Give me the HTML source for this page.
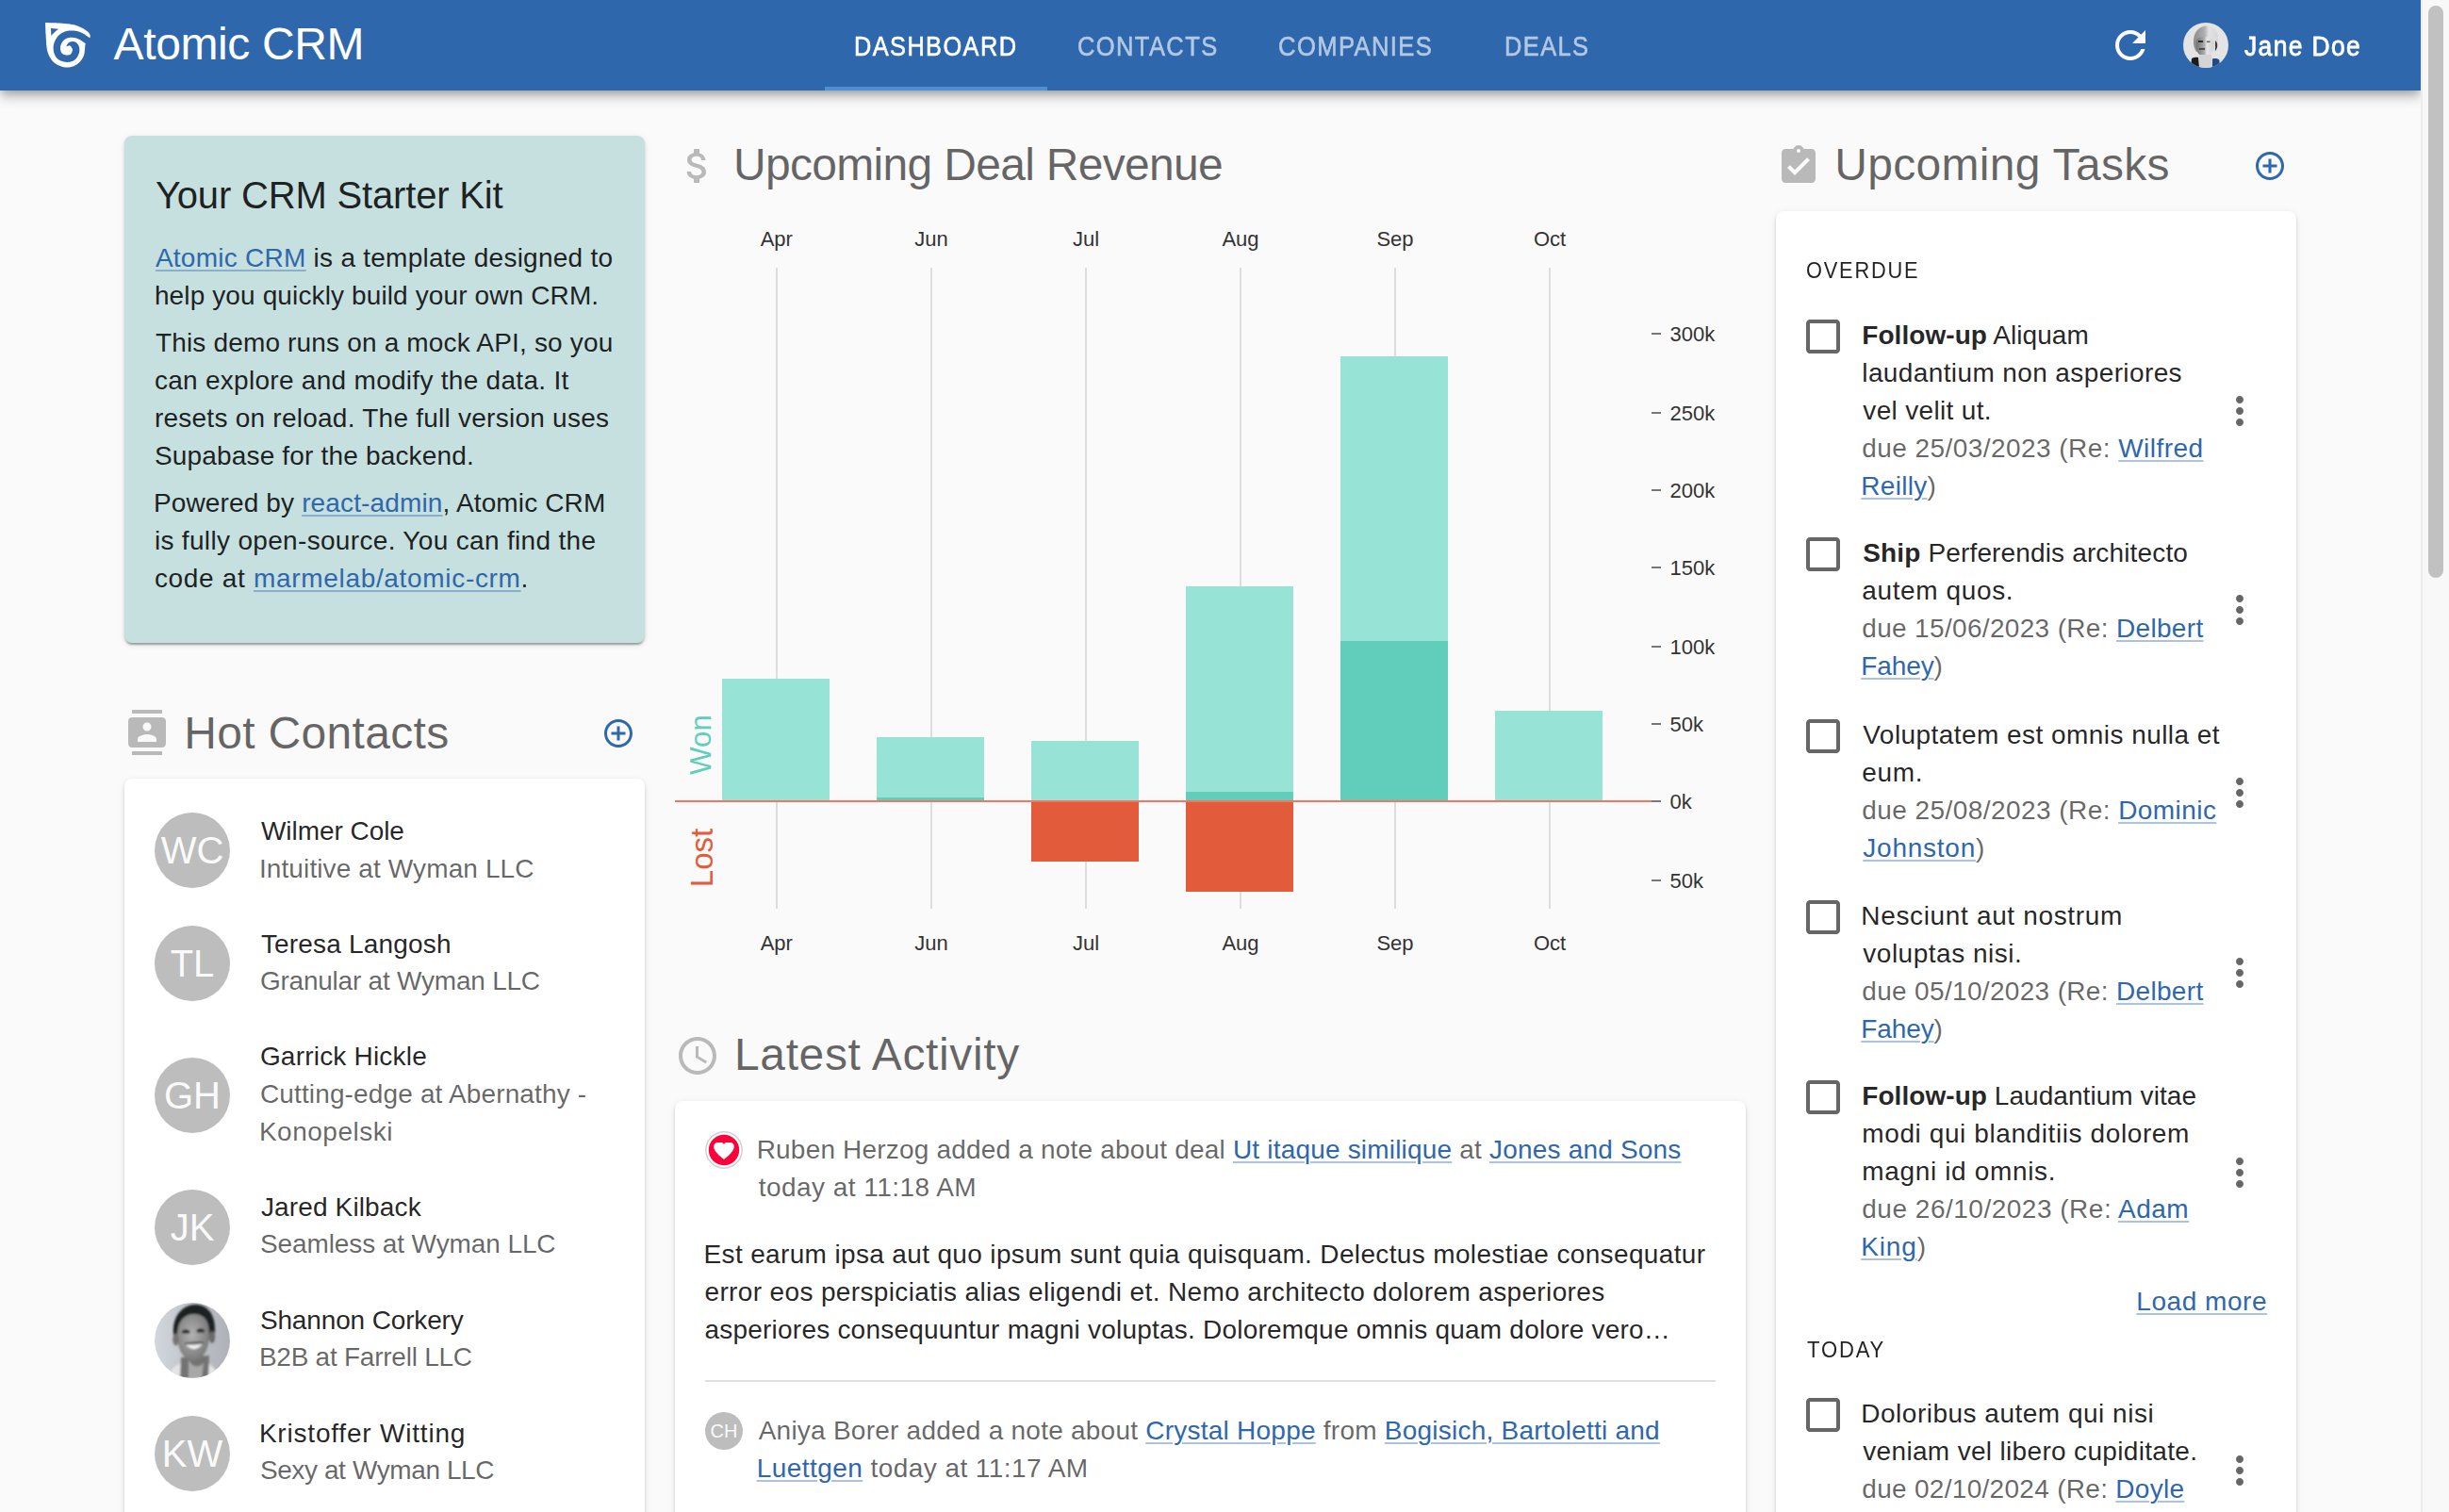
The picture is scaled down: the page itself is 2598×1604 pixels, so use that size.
<!DOCTYPE html><html><head><meta charset="utf-8"><style>
html,body{margin:0;padding:0;overflow:hidden;background:#fafafa;}
body{width:2598px;height:1604px;position:relative;font-family:"Liberation Sans", sans-serif;}
.t{position:absolute;white-space:nowrap;z-index:4;}
a{color:#2f67ad;text-decoration:underline;text-decoration-color:rgba(47,103,173,0.4);text-decoration-thickness:2px;text-underline-offset:3px;}
.abs{position:absolute;}
.card{position:absolute;background:#fff;border-radius:8px;box-shadow:0 4px 2px -2px rgba(0,0,0,0.2),0 2px 2px 0 rgba(0,0,0,0.14),0 2px 6px 0 rgba(0,0,0,0.12);}
svg{position:absolute;display:block;}
</style></head><body>

<div class="abs" style="left:0;top:0;width:2568px;height:96px;background:#2f67ad;box-shadow:0 4px 8px -2px rgba(0,0,0,0.2),0 8px 10px 0 rgba(0,0,0,0.14),0 2px 20px 0 rgba(0,0,0,0.12);z-index:2"></div>
<div class="abs" style="left:875px;top:92px;width:236px;height:4px;background:#4f8fd6;z-index:3"></div>
<div class="abs" style="left:2568px;top:0;width:30px;height:1604px;background:#f8f8f8;border-left:2px solid #ececec;box-sizing:border-box;z-index:5"></div>
<div class="abs" style="left:2576px;top:6px;width:16px;height:607px;background:#c1c1c1;border-radius:8px;z-index:6"></div>
<svg style="left:40px;top:16px;z-index:4" width="64" height="64" viewBox="0 0 64 64"><path fill="#fff" d="M8.04,7.96 C10.52,8.04 18.59,8.21 22.90,8.47 C27.21,8.73 30.67,9.01 33.90,9.50 C37.13,9.99 39.83,10.58 42.30,11.40 C44.77,12.22 46.87,13.33 48.70,14.40 C50.53,15.47 52.17,16.72 53.30,17.80 C54.43,18.88 55.15,19.88 55.50,20.90 C55.85,21.92 55.72,23.07 55.40,23.90 C55.08,24.73 54.40,24.72 53.60,25.90 C52.80,27.08 51.22,28.97 50.60,31.00 C49.98,33.03 50.22,36.00 49.90,38.10 C49.58,40.20 49.53,41.70 48.70,43.60 C47.87,45.50 46.67,47.73 44.90,49.50 C43.13,51.27 40.65,53.20 38.10,54.20 C35.55,55.20 32.28,55.65 29.60,55.50 C26.92,55.35 24.32,54.43 22.00,53.30 C19.68,52.17 17.47,50.67 15.70,48.70 C13.93,46.73 12.43,43.97 11.40,41.50 C10.37,39.03 9.97,37.28 9.50,33.90 C9.03,30.52 8.84,25.52 8.60,21.20 C8.36,16.88 8.13,10.17 8.04,7.96Z"/><path fill="#2f67ad" d="M60.74,28.55 L60.51,28.38 L60.24,28.18 L59.93,27.94 L59.57,27.66 L59.18,27.36 L58.77,27.04 L58.33,26.71 L57.87,26.36 L57.40,26.00 L56.92,25.64 L56.44,25.27 L55.96,24.91 L55.48,24.56 L55.02,24.22 L54.57,23.89 L54.16,23.59 L53.78,23.32 L53.42,23.06 L53.05,22.79 L52.69,22.52 L52.31,22.25 L51.94,21.97 L51.55,21.69 L51.16,21.41 L50.76,21.13 L50.35,20.86 L49.93,20.58 L49.50,20.31 L49.05,20.04 L48.58,19.77 L48.11,19.52 L47.63,19.28 L47.17,19.06 L46.72,18.85 L46.26,18.64 L45.80,18.44 L45.32,18.24 L44.83,18.05 L44.34,17.86 L43.84,17.68 L43.32,17.51 L42.80,17.34 L42.27,17.19 L41.73,17.05 L41.17,16.92 L40.61,16.81 L40.04,16.71 L39.48,16.63 L38.92,16.57 L38.36,16.51 L37.79,16.47 L37.22,16.43 L36.63,16.41 L36.04,16.40 L35.44,16.40 L34.83,16.41 L34.23,16.44 L33.62,16.49 L33.00,16.55 L32.39,16.63 L31.78,16.73 L31.17,16.84 L30.56,16.99 L29.96,17.15 L29.39,17.33 L28.84,17.52 L28.29,17.72 L27.75,17.95 L27.21,18.19 L26.67,18.45 L26.14,18.73 L25.62,19.02 L25.10,19.34 L24.59,19.67 L24.10,20.02 L23.61,20.40 L23.13,20.79 L22.67,21.21 L22.21,21.64 L21.78,22.10 L21.35,22.57 L20.95,23.07 L20.56,23.59 L20.19,24.12 L19.83,24.66 L19.48,25.21 L19.16,25.78 L18.84,26.35 L18.55,26.94 L18.27,27.53 L18.01,28.12 L17.76,28.72 L17.54,29.32 L17.34,29.93 L17.15,30.54 L17.00,31.16 L16.86,31.79 L16.76,32.43 L16.68,33.07 L16.63,33.70 L16.60,34.33 L16.60,34.95 L16.61,35.56 L16.65,36.17 L16.70,36.77 L16.76,37.35 L16.85,37.93 L16.94,38.49 L17.06,39.05 L17.18,39.58 L17.32,40.11 L17.47,40.62 L17.65,41.13 L17.84,41.63 L18.05,42.12 L18.27,42.61 L18.52,43.08 L18.79,43.54 L19.07,43.99 L19.38,44.43 L19.70,44.85 L20.04,45.26 L20.40,45.65 L20.78,46.03 L21.17,46.39 L21.58,46.74 L22.00,47.07 L22.45,47.38 L22.93,47.68 L23.43,47.97 L23.94,48.22 L24.46,48.46 L24.98,48.67 L25.51,48.87 L26.04,49.05 L26.58,49.21 L27.12,49.35 L27.66,49.48 L28.21,49.60 L28.75,49.69 L29.29,49.77 L29.83,49.83 L30.37,49.88 L30.91,49.90 L31.43,49.90 L31.96,49.89 L32.48,49.86 L33.01,49.81 L33.54,49.74 L34.07,49.65 L34.59,49.55 L35.12,49.42 L35.64,49.28 L36.16,49.12 L36.68,48.93 L37.19,48.72 L37.70,48.48 L38.20,48.22 L38.69,47.92 L39.19,47.58 L39.68,47.20 L40.13,46.79 L40.54,46.36 L40.92,45.92 L41.27,45.48 L41.59,45.03 L41.89,44.58 L42.16,44.13 L42.42,43.68 L42.65,43.23 L42.87,42.78 L43.07,42.34 L43.26,41.90 L43.42,41.48 L43.58,41.06 L43.72,40.64 L43.86,40.19 L43.98,39.73 L44.08,39.27 L44.17,38.81 L44.23,38.35 L44.29,37.88 L44.32,37.42 L44.34,36.96 L44.34,36.50 L44.32,36.04 L44.28,35.58 L44.23,35.12 L44.16,34.66 L44.06,34.20 L43.94,33.74 L43.79,33.27 L43.60,32.78 L43.38,32.31 L43.13,31.87 L42.88,31.45 L42.60,31.06 L42.32,30.69 L42.03,30.34 L41.72,30.01 L41.41,29.70 L41.10,29.40 L40.78,29.12 L40.45,28.86 L40.08,28.66 L39.68,28.52 L39.28,28.40 L38.88,28.28 L38.46,28.18 L38.05,28.11 L37.63,28.06 L37.23,28.03 L36.83,28.03 L36.43,28.05 L36.05,28.09 L35.67,28.14 L35.30,28.22 L34.94,28.31 L34.59,28.41 L34.25,28.53 L33.91,28.67 L33.59,28.82 L33.28,28.99 L32.96,29.18 L32.63,29.41 L32.32,29.68 L32.06,29.97 L31.83,30.27 L31.63,30.57 L31.45,30.88 L31.28,31.19 L31.13,31.50 L30.99,31.81 L30.86,32.10 L30.74,32.38 L30.63,32.64 L30.54,32.87 L30.45,33.08 L30.37,33.26 L30.30,33.40 L30.30,33.40 L30.45,33.35 L30.64,33.28 L30.85,33.19 L31.09,33.09 L31.34,32.98 L31.62,32.87 L31.90,32.75 L32.20,32.65 L32.49,32.55 L32.78,32.46 L33.06,32.38 L33.33,32.33 L33.57,32.31 L33.78,32.32 L33.93,32.36 L34.04,32.42 L34.16,32.49 L34.31,32.55 L34.46,32.63 L34.61,32.71 L34.75,32.80 L34.89,32.90 L35.03,33.01 L35.15,33.12 L35.27,33.24 L35.38,33.36 L35.48,33.49 L35.56,33.62 L35.62,33.75 L35.67,33.87 L35.70,34.00 L35.72,34.12 L35.75,34.25 L35.79,34.40 L35.83,34.57 L35.91,34.70 L36.03,34.80 L36.14,34.90 L36.26,35.00 L36.36,35.11 L36.46,35.22 L36.56,35.33 L36.63,35.43 L36.70,35.53 L36.75,35.60 L36.78,35.67 L36.80,35.71 L36.81,35.73 L36.83,35.79 L36.86,35.89 L36.88,36.01 L36.90,36.14 L36.92,36.29 L36.93,36.46 L36.94,36.63 L36.94,36.82 L36.93,37.01 L36.92,37.20 L36.89,37.40 L36.87,37.60 L36.83,37.79 L36.79,37.99 L36.74,38.17 L36.68,38.36 L36.60,38.59 L36.51,38.84 L36.41,39.10 L36.30,39.36 L36.17,39.63 L36.05,39.89 L35.91,40.15 L35.77,40.40 L35.63,40.63 L35.49,40.85 L35.35,41.04 L35.22,41.21 L35.09,41.36 L34.98,41.47 L34.89,41.56 L34.81,41.62 L34.71,41.68 L34.57,41.77 L34.41,41.85 L34.23,41.94 L34.02,42.02 L33.79,42.11 L33.55,42.18 L33.29,42.25 L33.03,42.31 L32.75,42.37 L32.47,42.41 L32.19,42.45 L31.91,42.48 L31.63,42.50 L31.35,42.50 L31.09,42.50 L30.83,42.49 L30.55,42.47 L30.25,42.43 L29.93,42.39 L29.60,42.33 L29.27,42.26 L28.94,42.18 L28.61,42.09 L28.28,41.99 L27.97,41.89 L27.67,41.78 L27.39,41.66 L27.14,41.55 L26.91,41.43 L26.72,41.33 L26.55,41.22 L26.38,41.10 L26.22,40.98 L26.06,40.84 L25.91,40.70 L25.76,40.56 L25.62,40.40 L25.49,40.24 L25.36,40.07 L25.24,39.90 L25.12,39.71 L25.01,39.51 L24.90,39.31 L24.80,39.09 L24.70,38.87 L24.61,38.63 L24.53,38.38 L24.44,38.10 L24.36,37.80 L24.29,37.47 L24.22,37.13 L24.16,36.77 L24.10,36.41 L24.06,36.03 L24.03,35.65 L24.01,35.28 L24.00,34.90 L24.00,34.52 L24.02,34.16 L24.05,33.81 L24.09,33.47 L24.14,33.15 L24.20,32.84 L24.29,32.52 L24.39,32.16 L24.52,31.79 L24.66,31.40 L24.82,31.00 L25.00,30.60 L25.19,30.20 L25.39,29.80 L25.61,29.40 L25.83,29.02 L26.06,28.64 L26.30,28.29 L26.53,27.95 L26.77,27.64 L27.00,27.36 L27.22,27.10 L27.45,26.87 L27.69,26.64 L27.94,26.41 L28.21,26.20 L28.48,25.99 L28.77,25.78 L29.06,25.59 L29.37,25.40 L29.68,25.22 L30.00,25.06 L30.33,24.90 L30.67,24.75 L31.01,24.61 L31.35,24.48 L31.70,24.36 L32.04,24.25 L32.37,24.16 L32.70,24.08 L33.06,24.01 L33.44,23.95 L33.84,23.90 L34.25,23.86 L34.67,23.83 L35.10,23.81 L35.54,23.80 L35.98,23.80 L36.42,23.81 L36.85,23.82 L37.29,23.85 L37.71,23.88 L38.13,23.92 L38.52,23.97 L38.89,24.02 L39.25,24.08 L39.60,24.16 L39.96,24.24 L40.32,24.33 L40.68,24.44 L41.05,24.55 L41.41,24.67 L41.78,24.80 L42.15,24.94 L42.52,25.09 L42.89,25.25 L43.26,25.41 L43.64,25.58 L44.01,25.75 L44.37,25.92 L44.70,26.09 L45.00,26.25 L45.31,26.43 L45.62,26.61 L45.93,26.81 L46.25,27.02 L46.57,27.23 L46.90,27.46 L47.23,27.70 L47.58,27.95 L47.93,28.21 L48.29,28.47 L48.66,28.75 L49.05,29.03 L49.45,29.32 L49.84,29.61 L50.24,29.89 L50.65,30.19 L51.08,30.51 L51.53,30.84 L51.99,31.19 L52.45,31.54 L52.92,31.89 L53.38,32.24 L53.83,32.59 L54.27,32.92 L54.68,33.24 L55.07,33.53 L55.43,33.81 L55.75,34.05 L56.03,34.27 L56.26,34.45Z"/><path fill="#2f67ad" d="M13.97,13.97 L22,14.8 C19,17.2 16.5,19.5 14.4,22 Z"/></svg>
<svg style="left:2236px;top:24px;z-index:4" width="48" height="48" viewBox="0 0 24 24"><path fill="#fff" d="M17.65 6.35C16.2 4.9 14.21 4 12 4c-4.42 0-7.99 3.58-7.99 8s3.57 8 7.99 8c3.73 0 6.84-2.55 7.73-6h-2.08c-.82 2.33-3.04 4-5.65 4-3.31 0-6-2.69-6-6s2.69-6 6-6c1.66 0 3.14.69 4.22 1.78L13 11h7V4l-2.35 2.35z"/></svg>
<svg style="left:2316px;top:24px;z-index:4" width="48" height="48" viewBox="0 0 48 48">
<defs><clipPath id="cj"><circle cx="24" cy="24" r="24"/></clipPath>
<linearGradient id="gh" x1="0" x2="1" y1="0" y2="0"><stop offset="0" stop-color="#8a8a8a"/><stop offset="0.45" stop-color="#b0b0b0"/><stop offset="0.62" stop-color="#e2e2e2"/><stop offset="1" stop-color="#d8d8d8"/></linearGradient>
<linearGradient id="gf" x1="0" x2="1" y1="0" y2="0"><stop offset="0" stop-color="#707070"/><stop offset="0.45" stop-color="#a8a8a8"/><stop offset="0.62" stop-color="#e6e6e6"/><stop offset="1" stop-color="#cfcfcf"/></linearGradient>
<filter id="jbl"><feGaussianBlur stdDeviation="0.7"/></filter></defs>
<g clip-path="url(#cj)"><rect width="48" height="48" fill="#e4e4e4"/><g filter="url(#jbl)">
<path d="M11,22 C10.5,10 17,3.5 25,3.5 C33,3.5 37.5,9 37,18 C37,24 35.5,28 34,31 L14,31 C12,28 11.2,25 11,22 Z" fill="url(#gh)"/>
<path d="M13.5,23 C13.5,16 17,15.5 22,15 C28,15 32.5,17 32.5,23 C32.5,31 28,36 22.5,36 C17,36 13.5,31 13.5,23 Z" fill="url(#gf)"/>
<path d="M34,19 C37,21 37,27 34,30 Z" fill="#3a3a3a"/>
<rect x="16" y="19" width="5" height="2" fill="#2a2a2a"/><rect x="25" y="19.5" width="3.5" height="1.6" fill="#666"/>
<rect x="17" y="27" width="6" height="1.8" fill="#444"/>
<path d="M17,34 L30,34 L31,48 L17,48 Z" fill="#d4d4d4"/>
<path d="M9,38 C11,37 14,36.5 16,37 L17,48 L8,48 Z" fill="#1c1c1c"/>
<path d="M31,38.5 C34,37.5 37,38 38.5,40 L38.5,48 L31,48 Z" fill="#1f4c8a"/>
</g></g></svg>
<div class="card" style="left:132px;top:144px;width:552px;height:538px;background:#c6dfdf;border-radius:8px"></div>
<div class="card" style="left:132px;top:826px;width:552px;height:900px;"></div>
<div class="card" style="left:716px;top:1168px;width:1136px;height:600px;"></div>
<div class="card" style="left:1884px;top:224px;width:552px;height:1500px;"></div>
<svg style="left:132px;top:753px" width="48" height="48" viewBox="0 0 24 24"><path fill="rgba(0,0,0,0.26)" d="M20 0H4v2h16V0zM4 24h16v-2H4v2zM20 4H4c-1.1 0-2 .9-2 2v12c0 1.1.9 2 2 2h16c1.1 0 2-.9 2-2V6c0-1.1-.9-2-2-2zm-8 2.75c1.24 0 2.25 1.01 2.25 2.25s-1.01 2.25-2.25 2.25S9.75 10.24 9.75 9 10.76 6.75 12 6.75zM17 17H7v-1.5c0-1.67 3.33-2.5 5-2.5s5 .83 5 2.5V17z"/></svg>
<svg style="left:638px;top:760px" width="36" height="36" viewBox="0 0 24 24"><path fill="#2f67ad" d="M13 7h-2v4H7v2h4v4h2v-4h4v-2h-4V7zm-1-5C6.48 2 2 6.48 2 12s4.48 10 10 10 10-4.48 10-10S17.52 2 12 2zm0 18c-4.41 0-8-3.59-8-8s3.59-8 8-8 8 3.59 8 8-3.59 8-8 8z"/></svg>
<svg style="left:2389.6px;top:158px" width="36" height="36" viewBox="0 0 24 24"><path fill="#2f67ad" d="M13 7h-2v4H7v2h4v4h2v-4h4v-2h-4V7zm-1-5C6.48 2 2 6.48 2 12s4.48 10 10 10 10-4.48 10-10S17.52 2 12 2zm0 18c-4.41 0-8-3.59-8-8s3.59-8 8-8 8 3.59 8 8-3.59 8-8 8z"/></svg>
<svg style="left:716px;top:152px" width="48" height="48" viewBox="0 0 24 24"><path fill="rgba(0,0,0,0.26)" d="M11.8 10.9c-2.27-.59-3-1.2-3-2.15 0-1.09 1.01-1.85 2.7-1.85 1.78 0 2.44.85 2.5 2.1h2.21c-.07-1.72-1.12-3.3-3.21-3.81V3h-3v2.16c-1.94.42-3.5 1.68-3.5 3.61 0 2.31 1.91 3.46 4.7 4.13 2.5.6 3 1.48 3 2.41 0 .69-.49 1.79-2.7 1.79-2.06 0-2.87-.92-2.98-2.1h-2.2c.12 2.19 1.76 3.42 3.68 3.83V21h3v-2.15c1.95-.37 3.5-1.5 3.5-3.55 0-2.84-2.43-3.81-4.7-4.4z"/></svg>
<svg style="left:716px;top:1096px" width="48" height="48" viewBox="0 0 24 24"><path fill="rgba(0,0,0,0.26)" d="M11.99 2C6.47 2 2 6.48 2 12s4.47 10 9.99 10C17.52 22 22 17.52 22 12S17.52 2 11.99 2zM12 20c-4.42 0-8-3.58-8-8s3.58-8 8-8 8 3.58 8 8-3.58 8-8 8zm.5-13H11v6l5.25 3.15.75-1.23-4.5-2.67z"/></svg>
<svg style="left:1884px;top:152px" width="48" height="48" viewBox="0 0 24 24"><path fill="rgba(0,0,0,0.26)" d="M19 3h-4.18C14.4 1.84 13.3 1 12 1c-1.3 0-2.4.84-2.82 2H5c-1.1 0-2 .9-2 2v14c0 1.1.9 2 2 2h14c1.1 0 2-.9 2-2V5c0-1.1-.9-2-2-2zm-7 0c.55 0 1 .45 1 1s-.45 1-1 1-1-.45-1-1 .45-1 1-1zm-2 14l-4-4 1.41-1.41L10 14.17l6.59-6.59L18 9l-8 8z"/></svg>
<div class="abs" style="left:164px;top:862px;width:80px;height:80px;border-radius:50%;background:#bdbdbd;color:#fafafa;font-size:40px;line-height:80px;text-align:center;">WC</div>
<div class="abs" style="left:164px;top:982px;width:80px;height:80px;border-radius:50%;background:#bdbdbd;color:#fafafa;font-size:40px;line-height:80px;text-align:center;">TL</div>
<div class="abs" style="left:164px;top:1122px;width:80px;height:80px;border-radius:50%;background:#bdbdbd;color:#fafafa;font-size:40px;line-height:80px;text-align:center;">GH</div>
<div class="abs" style="left:164px;top:1262px;width:80px;height:80px;border-radius:50%;background:#bdbdbd;color:#fafafa;font-size:40px;line-height:80px;text-align:center;">JK</div>
<div class="abs" style="left:164px;top:1502px;width:80px;height:80px;border-radius:50%;background:#bdbdbd;color:#fafafa;font-size:40px;line-height:80px;text-align:center;">KW</div>
<svg style="left:164px;top:1382px" width="80" height="80" viewBox="0 0 80 80">
<defs><clipPath id="cs"><circle cx="40" cy="40" r="40"/></clipPath>
<linearGradient id="sbg" x1="0" x2="1"><stop offset="0" stop-color="#d2d6dd"/><stop offset="0.5" stop-color="#c0c4ca"/><stop offset="1" stop-color="#aeb2b8"/></linearGradient>
<radialGradient id="sface" cx="0.45" cy="0.45" r="0.6"><stop offset="0" stop-color="#b3b3b3"/><stop offset="1" stop-color="#777777"/></radialGradient>
<filter id="sbl"><feGaussianBlur stdDeviation="0.9"/></filter></defs>
<g clip-path="url(#cs)"><rect width="80" height="80" fill="url(#sbg)"/>
<g filter="url(#sbl)">
<path d="M14,80 C16,70 24,65 30,64 L52,63 C60,65 66,70 68,80 Z" fill="#e4e4e4"/>
<path d="M27,80 L28,58 L58,56 L57,80 Z" fill="#737373"/>
<path d="M36,60 C39,68 46,70 52,64 L50,80 L36,80 Z" fill="#a8a8a8"/>
<path d="M20,32 C19,14 30,2 43,2 C56,2 64,12 64,28 C64,33 63,37 62,39 L21,39 C20.5,37 20,35 20,32 Z" fill="#1e2224"/>
<path d="M24,34 C24,19 32,12 42,12 C52,12 58,18 58,33 C58,50 51,61 41,61 C31,61 24,50 24,34 Z" fill="url(#sface)"/>
<ellipse cx="22.5" cy="39" rx="3.2" ry="6.5" fill="#757575"/><ellipse cx="61" cy="36.5" rx="3.2" ry="6.5" fill="#6a6a6a"/>
<path d="M29,30 C31,28 35,28 37.5,30 L37,32.5 L29.5,32.5 Z" fill="#2b2b2b"/><path d="M44.5,29 C47,27 51,27 53,29 L52.5,31.5 L45,31.5 Z" fill="#2b2b2b"/>
<path d="M33,44 C38,51 46,51 51,43 C46,45.5 38,45.5 33,44 Z" fill="#f0f0f0"/>
<path d="M32,43.5 C38,42.5 45,42 52,42.5" stroke="#3a3a3a" stroke-width="1.4" fill="none"/>
</g></g></svg>
<svg style="left:748px;top:1200px" width="40" height="40" viewBox="0 0 40 40">
<circle cx="20" cy="20" r="19.2" fill="#fff" stroke="#cfcfcf" stroke-width="1.4"/><circle cx="20" cy="20" r="16.2" fill="#fd023a"/>
<path fill="#fff" d="M20,30 C14.5,25.5 9.2,21 9.2,16.2 C9.2,13.5 11,11.9 13.6,11.9 L17.8,11.9 C18.8,12.4 19.5,13 20,13.9 C20.5,13 21.2,12.4 22.2,11.9 L26.4,11.9 C29,11.9 30.8,13.5 30.8,16.2 C30.8,21 25.5,25.5 20,30 Z"/></svg>
<div class="abs" style="left:748px;top:1498px;width:40px;height:40px;border-radius:50%;background:#bdbdbd;color:#fafafa;font-size:20px;line-height:40px;text-align:center;">CH</div>
<div class="abs" style="left:748px;top:1464px;width:1072px;height:2px;background:#e0e0e0"></div>
<svg style="left:1910px;top:332.6px" width="48" height="48" viewBox="0 0 24 24"><path fill="rgba(0,0,0,0.6)" d="M19 5v14H5V5h14m0-2H5c-1.1 0-2 .9-2 2v14c0 1.1.9 2 2 2h14c1.1 0 2-.9 2-2V5c0-1.1-.9-2-2-2z"/></svg>
<svg style="left:2352px;top:411.9px" width="48" height="48" viewBox="0 0 24 24"><path fill="rgba(0,0,0,0.6)" d="M12 8c1.1 0 2-.9 2-2s-.9-2-2-2-2 .9-2 2 .9 2 2 2zm0 2c-1.1 0-2 .9-2 2s.9 2 2 2 2-.9 2-2-.9-2-2-2zm0 6c-1.1 0-2 .9-2 2s.9 2 2 2 2-.9 2-2-.9-2-2-2z"/></svg>
<svg style="left:1910px;top:564.0px" width="48" height="48" viewBox="0 0 24 24"><path fill="rgba(0,0,0,0.6)" d="M19 5v14H5V5h14m0-2H5c-1.1 0-2 .9-2 2v14c0 1.1.9 2 2 2h14c1.1 0 2-.9 2-2V5c0-1.1-.9-2-2-2z"/></svg>
<svg style="left:2352px;top:623.4px" width="48" height="48" viewBox="0 0 24 24"><path fill="rgba(0,0,0,0.6)" d="M12 8c1.1 0 2-.9 2-2s-.9-2-2-2-2 .9-2 2 .9 2 2 2zm0 2c-1.1 0-2 .9-2 2s.9 2 2 2 2-.9 2-2-.9-2-2-2zm0 6c-1.1 0-2 .9-2 2s.9 2 2 2 2-.9 2-2-.9-2-2-2z"/></svg>
<svg style="left:1910px;top:757.2px" width="48" height="48" viewBox="0 0 24 24"><path fill="rgba(0,0,0,0.6)" d="M19 5v14H5V5h14m0-2H5c-1.1 0-2 .9-2 2v14c0 1.1.9 2 2 2h14c1.1 0 2-.9 2-2V5c0-1.1-.9-2-2-2z"/></svg>
<svg style="left:2352px;top:816.6px" width="48" height="48" viewBox="0 0 24 24"><path fill="rgba(0,0,0,0.6)" d="M12 8c1.1 0 2-.9 2-2s-.9-2-2-2-2 .9-2 2 .9 2 2 2zm0 2c-1.1 0-2 .9-2 2s.9 2 2 2 2-.9 2-2-.9-2-2-2zm0 6c-1.1 0-2 .9-2 2s.9 2 2 2 2-.9 2-2-.9-2-2-2z"/></svg>
<svg style="left:1910px;top:948.8px" width="48" height="48" viewBox="0 0 24 24"><path fill="rgba(0,0,0,0.6)" d="M19 5v14H5V5h14m0-2H5c-1.1 0-2 .9-2 2v14c0 1.1.9 2 2 2h14c1.1 0 2-.9 2-2V5c0-1.1-.9-2-2-2z"/></svg>
<svg style="left:2352px;top:1008.2px" width="48" height="48" viewBox="0 0 24 24"><path fill="rgba(0,0,0,0.6)" d="M12 8c1.1 0 2-.9 2-2s-.9-2-2-2-2 .9-2 2 .9 2 2 2zm0 2c-1.1 0-2 .9-2 2s.9 2 2 2 2-.9 2-2-.9-2-2-2zm0 6c-1.1 0-2 .9-2 2s.9 2 2 2 2-.9 2-2-.9-2-2-2z"/></svg>
<svg style="left:1910px;top:1140.2px" width="48" height="48" viewBox="0 0 24 24"><path fill="rgba(0,0,0,0.6)" d="M19 5v14H5V5h14m0-2H5c-1.1 0-2 .9-2 2v14c0 1.1.9 2 2 2h14c1.1 0 2-.9 2-2V5c0-1.1-.9-2-2-2z"/></svg>
<svg style="left:2352px;top:1219.5px" width="48" height="48" viewBox="0 0 24 24"><path fill="rgba(0,0,0,0.6)" d="M12 8c1.1 0 2-.9 2-2s-.9-2-2-2-2 .9-2 2 .9 2 2 2zm0 2c-1.1 0-2 .9-2 2s.9 2 2 2 2-.9 2-2-.9-2-2-2zm0 6c-1.1 0-2 .9-2 2s.9 2 2 2 2-.9 2-2-.9-2-2-2z"/></svg>
<svg style="left:1910px;top:1476.8px" width="48" height="48" viewBox="0 0 24 24"><path fill="rgba(0,0,0,0.6)" d="M19 5v14H5V5h14m0-2H5c-1.1 0-2 .9-2 2v14c0 1.1.9 2 2 2h14c1.1 0 2-.9 2-2V5c0-1.1-.9-2-2-2z"/></svg>
<svg style="left:2352px;top:1536.2px" width="48" height="48" viewBox="0 0 24 24"><path fill="rgba(0,0,0,0.6)" d="M12 8c1.1 0 2-.9 2-2s-.9-2-2-2-2 .9-2 2 .9 2 2 2zm0 2c-1.1 0-2 .9-2 2s.9 2 2 2 2-.9 2-2-.9-2-2-2zm0 6c-1.1 0-2 .9-2 2s.9 2 2 2 2-.9 2-2-.9-2-2-2z"/></svg>
<div class="abs" style="left:822.8px;top:284px;width:2px;height:680px;background:#dddddd"></div>
<div class="abs" style="left:987.0px;top:284px;width:2px;height:680px;background:#dddddd"></div>
<div class="abs" style="left:1151.0px;top:284px;width:2px;height:680px;background:#dddddd"></div>
<div class="abs" style="left:1315.0px;top:284px;width:2px;height:680px;background:#dddddd"></div>
<div class="abs" style="left:1479.0px;top:284px;width:2px;height:680px;background:#dddddd"></div>
<div class="abs" style="left:1643.0px;top:284px;width:2px;height:680px;background:#dddddd"></div>
<div class="abs" style="left:766px;top:720.0px;width:114px;height:129.0px;background:#97e3d5"></div>
<div class="abs" style="left:930px;top:782.0px;width:114px;height:64.0px;background:#97e3d5"></div>
<div class="abs" style="left:930px;top:846.0px;width:114px;height:3.0px;background:#61cdbb"></div>
<div class="abs" style="left:1094px;top:786.0px;width:114px;height:63.0px;background:#97e3d5"></div>
<div class="abs" style="left:1094px;top:851px;width:114px;height:62.8px;background:#e25c3b"></div>
<div class="abs" style="left:1258px;top:622.0px;width:114px;height:217.6px;background:#97e3d5"></div>
<div class="abs" style="left:1258px;top:839.6px;width:114px;height:9.4px;background:#61cdbb"></div>
<div class="abs" style="left:1258px;top:851px;width:114px;height:94.7px;background:#e25c3b"></div>
<div class="abs" style="left:1422px;top:378.0px;width:114px;height:302.0px;background:#97e3d5"></div>
<div class="abs" style="left:1422px;top:680.0px;width:114px;height:169.0px;background:#61cdbb"></div>
<div class="abs" style="left:1586px;top:754.0px;width:114px;height:95.0px;background:#97e3d5"></div>
<div class="abs" style="left:716px;top:849px;width:1036px;height:2px;background:#f47560"></div>
<div class="abs" style="left:1752px;top:352.8px;width:10px;height:2px;background:#777"></div>
<div class="abs" style="left:1752px;top:436.8px;width:10px;height:2px;background:#777"></div>
<div class="abs" style="left:1752px;top:518.8px;width:10px;height:2px;background:#777"></div>
<div class="abs" style="left:1752px;top:600.9px;width:10px;height:2px;background:#777"></div>
<div class="abs" style="left:1752px;top:684.7px;width:10px;height:2px;background:#777"></div>
<div class="abs" style="left:1752px;top:766.8px;width:10px;height:2px;background:#777"></div>
<div class="abs" style="left:1752px;top:848.8px;width:10px;height:2px;background:#777"></div>
<div class="abs" style="left:1752px;top:932.8px;width:10px;height:2px;background:#777"></div>
<div class="t" style="left:744px;top:789.5px;font-size:31.3px;line-height:32px;color:#61cdbb;transform:translate(-50%,-50%) rotate(-90deg);">Won</div>
<div class="t" style="left:744px;top:909.5px;font-size:33px;line-height:33px;color:#e25c3b;transform:translate(-50%,-50%) rotate(-90deg);">Lost</div>
<div class="t" style="left:120.60px;top:11.36px;font-size:48px;line-height:72px;color:#fff;letter-spacing:-0.384px;"><span>Atomic CRM</span></div>
<div class="t" style="left:906.15px;top:26.65px;font-size:29px;line-height:44px;color:#fff;-webkit-text-stroke:0.6px #fff;letter-spacing:1.60px;transform:scaleX(0.8752);transform-origin:0 0;"><span>DASHBOARD</span></div>
<div class="t" style="left:1142.62px;top:26.65px;font-size:29px;line-height:44px;color:#b3c8e2;-webkit-text-stroke:0.6px #b3c8e2;letter-spacing:1.60px;transform:scaleX(0.8791);transform-origin:0 0;"><span>CONTACTS</span></div>
<div class="t" style="left:1355.72px;top:26.65px;font-size:29px;line-height:44px;color:#b3c8e2;-webkit-text-stroke:0.6px #b3c8e2;letter-spacing:1.60px;transform:scaleX(0.8820);transform-origin:0 0;"><span>COMPANIES</span></div>
<div class="t" style="left:1596.25px;top:26.65px;font-size:29px;line-height:44px;color:#b3c8e2;-webkit-text-stroke:0.6px #b3c8e2;letter-spacing:1.60px;transform:scaleX(0.8773);transform-origin:0 0;"><span>DEALS</span></div>
<div class="t" style="left:2380.90px;top:27.15px;font-size:29px;line-height:44px;color:#fff;-webkit-text-stroke:0.8px #fff;letter-spacing:1.50px;transform:scaleX(0.9122);transform-origin:0 0;"><span>Jane Doe</span></div>
<div class="t" style="left:164.90px;top:177.13px;font-size:40px;line-height:60px;color:rgba(0,0,0,0.87);letter-spacing:-0.167px;"><span>Your CRM Starter Kit</span></div>
<div class="t" style="left:164.90px;top:252.99px;font-size:28px;line-height:42px;color:rgba(0,0,0,0.87);letter-spacing:0.256px;"><span><a>Atomic CRM</a> is a template designed to</span></div>
<div class="t" style="left:163.90px;top:292.69px;font-size:28px;line-height:42px;color:rgba(0,0,0,0.87);letter-spacing:0.125px;"><span>help you quickly build your own CRM.</span></div>
<div class="t" style="left:164.90px;top:343.29px;font-size:28px;line-height:42px;color:rgba(0,0,0,0.87);letter-spacing:0.172px;"><span>This demo runs on a mock API, so you</span></div>
<div class="t" style="left:163.90px;top:383.49px;font-size:28px;line-height:42px;color:rgba(0,0,0,0.87);letter-spacing:0.287px;"><span>can explore and modify the data. It</span></div>
<div class="t" style="left:163.90px;top:422.99px;font-size:28px;line-height:42px;color:rgba(0,0,0,0.87);letter-spacing:0.249px;"><span>resets on reload. The full version uses</span></div>
<div class="t" style="left:163.90px;top:462.99px;font-size:28px;line-height:42px;color:rgba(0,0,0,0.87);letter-spacing:0.175px;"><span>Supabase for the backend.</span></div>
<div class="t" style="left:162.90px;top:512.99px;font-size:28px;line-height:42px;color:rgba(0,0,0,0.87);letter-spacing:0.145px;"><span>Powered by <a>react-admin</a>, Atomic CRM</span></div>
<div class="t" style="left:163.90px;top:552.99px;font-size:28px;line-height:42px;color:rgba(0,0,0,0.87);letter-spacing:0.326px;"><span>is fully open-source. You can find the</span></div>
<div class="t" style="left:163.90px;top:592.69px;font-size:28px;line-height:42px;color:rgba(0,0,0,0.87);letter-spacing:0.680px;"><span>code at <a>marmelab/atomic-crm</a>.</span></div>
<div class="t" style="left:195.20px;top:741.56px;font-size:48px;line-height:72px;color:rgba(0,0,0,0.6);letter-spacing:0.332px;"><span>Hot Contacts</span></div>
<div class="t" style="left:276.90px;top:860.99px;font-size:28px;line-height:42px;color:rgba(0,0,0,0.87);letter-spacing:-0.040px;"><span>Wilmer Cole</span></div>
<div class="t" style="left:274.90px;top:900.59px;font-size:28px;line-height:42px;color:rgba(0,0,0,0.6);letter-spacing:0.115px;"><span>Intuitive at Wyman LLC</span></div>
<div class="t" style="left:276.90px;top:980.79px;font-size:28px;line-height:42px;color:rgba(0,0,0,0.87);letter-spacing:0.185px;"><span>Teresa Langosh</span></div>
<div class="t" style="left:275.90px;top:1020.39px;font-size:28px;line-height:42px;color:rgba(0,0,0,0.6);letter-spacing:-0.222px;"><span>Granular at Wyman LLC</span></div>
<div class="t" style="left:275.90px;top:1100.49px;font-size:28px;line-height:42px;color:rgba(0,0,0,0.87);letter-spacing:0.203px;"><span>Garrick Hickle</span></div>
<div class="t" style="left:275.90px;top:1140.09px;font-size:28px;line-height:42px;color:rgba(0,0,0,0.6);letter-spacing:0.145px;"><span>Cutting-edge at Abernathy -</span></div>
<div class="t" style="left:274.90px;top:1179.69px;font-size:28px;line-height:42px;color:rgba(0,0,0,0.6);letter-spacing:0.515px;"><span>Konopelski</span></div>
<div class="t" style="left:276.90px;top:1259.59px;font-size:28px;line-height:42px;color:rgba(0,0,0,0.87);letter-spacing:0.142px;"><span>Jared Kilback</span></div>
<div class="t" style="left:275.90px;top:1299.19px;font-size:28px;line-height:42px;color:rgba(0,0,0,0.6);letter-spacing:-0.097px;"><span>Seamless at Wyman LLC</span></div>
<div class="t" style="left:275.90px;top:1379.69px;font-size:28px;line-height:42px;color:rgba(0,0,0,0.87);letter-spacing:-0.143px;"><span>Shannon Corkery</span></div>
<div class="t" style="left:274.90px;top:1419.29px;font-size:28px;line-height:42px;color:rgba(0,0,0,0.6);letter-spacing:-0.247px;"><span>B2B at Farrell LLC</span></div>
<div class="t" style="left:274.90px;top:1499.79px;font-size:28px;line-height:42px;color:rgba(0,0,0,0.87);letter-spacing:0.800px;"><span>Kristoffer Witting</span></div>
<div class="t" style="left:275.90px;top:1539.39px;font-size:28px;line-height:42px;color:rgba(0,0,0,0.6);letter-spacing:-0.396px;"><span>Sexy at Wyman LLC</span></div>
<div class="t" style="left:778.00px;top:139.36px;font-size:48px;line-height:72px;color:rgba(0,0,0,0.6);letter-spacing:-0.696px;"><span>Upcoming Deal Revenue</span></div>
<div class="t" style="left:779.00px;top:1083.36px;font-size:48px;line-height:72px;color:rgba(0,0,0,0.6);letter-spacing:0.624px;"><span>Latest Activity</span></div>
<div class="t" style="left:1946.30px;top:138.76px;font-size:48px;line-height:72px;color:rgba(0,0,0,0.6);letter-spacing:0.303px;"><span>Upcoming Tasks</span></div>
<div class="t" style="left:802.70px;top:1198.99px;font-size:28px;line-height:42px;color:rgba(0,0,0,0.6);letter-spacing:0.191px;"><span>Ruben Herzog added a note about deal <a>Ut itaque similique</a> at <a>Jones and Sons</a></span></div>
<div class="t" style="left:804.70px;top:1238.89px;font-size:28px;line-height:42px;color:rgba(0,0,0,0.6);letter-spacing:0.461px;"><span>today at 11:18 AM</span></div>
<div class="t" style="left:746.50px;top:1309.89px;font-size:28px;line-height:42px;color:rgba(0,0,0,0.87);letter-spacing:0.353px;"><span>Est earum ipsa aut quo ipsum sunt quia quisquam. Delectus molestiae consequatur</span></div>
<div class="t" style="left:747.50px;top:1349.79px;font-size:28px;line-height:42px;color:rgba(0,0,0,0.87);letter-spacing:0.362px;"><span>error eos perspiciatis alias eligendi et. Nemo architecto dolorem asperiores</span></div>
<div class="t" style="left:747.50px;top:1389.59px;font-size:28px;line-height:42px;color:rgba(0,0,0,0.87);letter-spacing:0.216px;"><span>asperiores consequuntur magni voluptas. Doloremque omnis quam dolore vero…</span></div>
<div class="t" style="left:804.70px;top:1496.99px;font-size:28px;line-height:42px;color:rgba(0,0,0,0.6);letter-spacing:0.239px;"><span>Aniya Borer added a note about <a>Crystal Hoppe</a> from <a>Bogisich, Bartoletti and</a></span></div>
<div class="t" style="left:802.70px;top:1536.89px;font-size:28px;line-height:42px;color:rgba(0,0,0,0.6);letter-spacing:0.444px;"><span><a>Luettgen</a> today at 11:17 AM</span></div>
<div class="t" style="left:1915.79px;top:269.38px;font-size:24px;line-height:36px;color:rgba(0,0,0,0.87);letter-spacing:2.00px;transform:scaleX(0.9069);transform-origin:0 0;"><span>OVERDUE</span></div>
<div class="t" style="left:1975.30px;top:334.79px;font-size:28px;line-height:42px;color:rgba(0,0,0,0.87);letter-spacing:0.052px;"><span><b>Follow-up</b> Aliquam</span></div>
<div class="t" style="left:1975.30px;top:374.79px;font-size:28px;line-height:42px;color:rgba(0,0,0,0.87);letter-spacing:0.388px;"><span>laudantium non asperiores</span></div>
<div class="t" style="left:1976.30px;top:414.79px;font-size:28px;line-height:42px;color:rgba(0,0,0,0.87);letter-spacing:0.333px;"><span>vel velit ut.</span></div>
<div class="t" style="left:1975.30px;top:454.79px;font-size:28px;line-height:42px;color:rgba(0,0,0,0.6);letter-spacing:0.441px;"><span>due 25/03/2023 (Re: <a>Wilfred</a></span></div>
<div class="t" style="left:1974.30px;top:494.79px;font-size:28px;line-height:42px;color:rgba(0,0,0,0.6);letter-spacing:0.288px;"><span><a>Reilly</a>)</span></div>
<div class="t" style="left:1976.30px;top:566.19px;font-size:28px;line-height:42px;color:rgba(0,0,0,0.87);letter-spacing:0.145px;"><span><b>Ship</b> Perferendis architecto</span></div>
<div class="t" style="left:1975.30px;top:606.19px;font-size:28px;line-height:42px;color:rgba(0,0,0,0.87);letter-spacing:0.617px;"><span>autem quos.</span></div>
<div class="t" style="left:1975.30px;top:646.19px;font-size:28px;line-height:42px;color:rgba(0,0,0,0.6);letter-spacing:0.328px;"><span>due 15/06/2023 (Re: <a>Delbert</a></span></div>
<div class="t" style="left:1974.30px;top:686.19px;font-size:28px;line-height:42px;color:rgba(0,0,0,0.6);letter-spacing:-0.106px;"><span><a>Fahey</a>)</span></div>
<div class="t" style="left:1976.30px;top:759.39px;font-size:28px;line-height:42px;color:rgba(0,0,0,0.87);letter-spacing:0.447px;"><span>Voluptatem est omnis nulla et</span></div>
<div class="t" style="left:1975.30px;top:799.39px;font-size:28px;line-height:42px;color:rgba(0,0,0,0.87);letter-spacing:0.676px;"><span>eum.</span></div>
<div class="t" style="left:1975.30px;top:839.39px;font-size:28px;line-height:42px;color:rgba(0,0,0,0.6);letter-spacing:0.437px;"><span>due 25/08/2023 (Re: <a>Dominic</a></span></div>
<div class="t" style="left:1976.30px;top:879.39px;font-size:28px;line-height:42px;color:rgba(0,0,0,0.6);letter-spacing:0.757px;"><span><a>Johnston</a>)</span></div>
<div class="t" style="left:1974.30px;top:950.99px;font-size:28px;line-height:42px;color:rgba(0,0,0,0.87);letter-spacing:0.655px;"><span>Nesciunt aut nostrum</span></div>
<div class="t" style="left:1976.30px;top:990.99px;font-size:28px;line-height:42px;color:rgba(0,0,0,0.87);letter-spacing:0.508px;"><span>voluptas nisi.</span></div>
<div class="t" style="left:1975.30px;top:1030.99px;font-size:28px;line-height:42px;color:rgba(0,0,0,0.6);letter-spacing:0.328px;"><span>due 05/10/2023 (Re: <a>Delbert</a></span></div>
<div class="t" style="left:1974.30px;top:1070.99px;font-size:28px;line-height:42px;color:rgba(0,0,0,0.6);letter-spacing:-0.106px;"><span><a>Fahey</a>)</span></div>
<div class="t" style="left:1975.30px;top:1142.39px;font-size:28px;line-height:42px;color:rgba(0,0,0,0.87);letter-spacing:0.058px;"><span><b>Follow-up</b> Laudantium vitae</span></div>
<div class="t" style="left:1975.30px;top:1182.39px;font-size:28px;line-height:42px;color:rgba(0,0,0,0.87);letter-spacing:0.596px;"><span>modi qui blanditiis dolorem</span></div>
<div class="t" style="left:1975.30px;top:1222.39px;font-size:28px;line-height:42px;color:rgba(0,0,0,0.87);letter-spacing:0.649px;"><span>magni id omnis.</span></div>
<div class="t" style="left:1975.30px;top:1262.39px;font-size:28px;line-height:42px;color:rgba(0,0,0,0.6);letter-spacing:0.505px;"><span>due 26/10/2023 (Re: <a>Adam</a></span></div>
<div class="t" style="left:1974.30px;top:1302.39px;font-size:28px;line-height:42px;color:rgba(0,0,0,0.6);letter-spacing:0.837px;"><span><a>King</a>)</span></div>
<div class="t" style="left:1974.30px;top:1478.99px;font-size:28px;line-height:42px;color:rgba(0,0,0,0.87);letter-spacing:0.500px;"><span>Doloribus autem qui nisi</span></div>
<div class="t" style="left:1976.30px;top:1518.99px;font-size:28px;line-height:42px;color:rgba(0,0,0,0.87);letter-spacing:0.327px;"><span>veniam vel libero cupiditate.</span></div>
<div class="t" style="left:1975.30px;top:1558.99px;font-size:28px;line-height:42px;color:rgba(0,0,0,0.6);letter-spacing:0.295px;"><span>due 02/10/2024 (Re: <a>Doyle</a></span></div>
<div class="t" style="left:2266.30px;top:1359.99px;font-size:28px;line-height:42px;color:rgba(0,0,0,0.87);letter-spacing:0.550px;"><span><a>Load more</a></span></div>
<div class="t" style="left:1917.30px;top:1414.08px;font-size:24px;line-height:36px;color:rgba(0,0,0,0.87);letter-spacing:2.00px;transform:scaleX(0.9190);transform-origin:0 0;"><span>TODAY</span></div>
<div class="t" style="left:623.8px;width:400px;text-align:center;top:242.57px;font-size:22px;line-height:22px;color:#333;"><span>Apr</span></div>
<div class="t" style="left:623.8px;width:400px;text-align:center;top:989.67px;font-size:22px;line-height:22px;color:#333;"><span>Apr</span></div>
<div class="t" style="left:788.0px;width:400px;text-align:center;top:242.57px;font-size:22px;line-height:22px;color:#333;"><span>Jun</span></div>
<div class="t" style="left:788.0px;width:400px;text-align:center;top:989.67px;font-size:22px;line-height:22px;color:#333;"><span>Jun</span></div>
<div class="t" style="left:952.0px;width:400px;text-align:center;top:242.57px;font-size:22px;line-height:22px;color:#333;"><span>Jul</span></div>
<div class="t" style="left:952.0px;width:400px;text-align:center;top:989.67px;font-size:22px;line-height:22px;color:#333;"><span>Jul</span></div>
<div class="t" style="left:1116.0px;width:400px;text-align:center;top:242.57px;font-size:22px;line-height:22px;color:#333;"><span>Aug</span></div>
<div class="t" style="left:1116.0px;width:400px;text-align:center;top:989.67px;font-size:22px;line-height:22px;color:#333;"><span>Aug</span></div>
<div class="t" style="left:1280.0px;width:400px;text-align:center;top:242.57px;font-size:22px;line-height:22px;color:#333;"><span>Sep</span></div>
<div class="t" style="left:1280.0px;width:400px;text-align:center;top:989.67px;font-size:22px;line-height:22px;color:#333;"><span>Sep</span></div>
<div class="t" style="left:1444.0px;width:400px;text-align:center;top:242.57px;font-size:22px;line-height:22px;color:#333;"><span>Oct</span></div>
<div class="t" style="left:1444.0px;width:400px;text-align:center;top:989.67px;font-size:22px;line-height:22px;color:#333;"><span>Oct</span></div>
<div class="t" style="left:1771.50px;top:344.17px;font-size:22px;line-height:22px;color:#333;"><span>300k</span></div>
<div class="t" style="left:1771.50px;top:428.17px;font-size:22px;line-height:22px;color:#333;"><span>250k</span></div>
<div class="t" style="left:1771.50px;top:510.17px;font-size:22px;line-height:22px;color:#333;"><span>200k</span></div>
<div class="t" style="left:1771.50px;top:592.27px;font-size:22px;line-height:22px;color:#333;"><span>150k</span></div>
<div class="t" style="left:1771.50px;top:676.07px;font-size:22px;line-height:22px;color:#333;"><span>100k</span></div>
<div class="t" style="left:1771.50px;top:758.17px;font-size:22px;line-height:22px;color:#333;"><span>50k</span></div>
<div class="t" style="left:1771.50px;top:840.17px;font-size:22px;line-height:22px;color:#333;"><span>0k</span></div>
<div class="t" style="left:1771.50px;top:924.17px;font-size:22px;line-height:22px;color:#333;"><span>50k</span></div>
</body></html>
